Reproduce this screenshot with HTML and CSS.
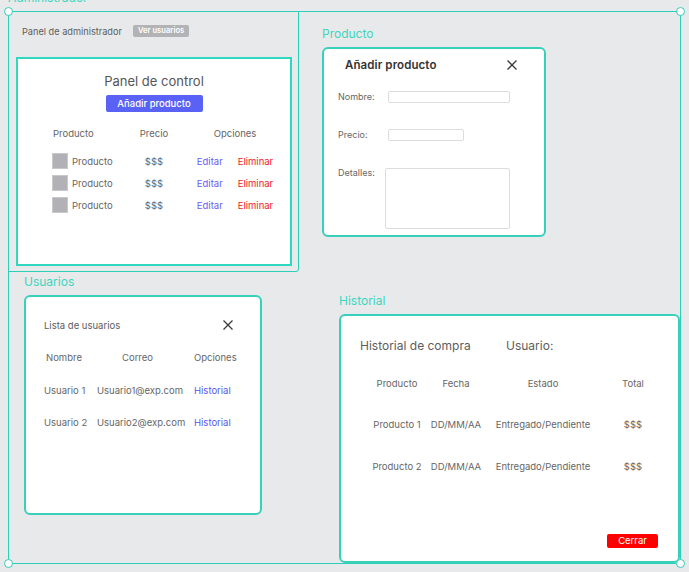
FILE: index.html
```html
<!DOCTYPE html>
<html lang="es">
<head>
<meta charset="utf-8">
<title>Administrador</title>
<link rel="stylesheet" href="styles.css">
</head>
<body>
<div class="canvas">
  <div class="selection">
    <span class="handle tl"></span><span class="handle tr"></span>
    <span class="handle bl"></span><span class="handle br"></span>
  </div>

  <section class="board board-admin">
    <div class="board-label">Administrador</div>
    <div class="admin-frame">
      <div class="admin-head">
        <span>Panel de administrador</span>
        <span class="badge">Ver usuarios</span>
      </div>
      <div class="panel">
        <div class="panel-title">Panel de control</div>
        <button class="btn-primary">Añadir producto</button>
        <div class="ptable">
          <div class="ph c1">Producto</div><div class="ph c2">Precio</div><div class="ph c3">Opciones</div>
          <div class="pr c1"><span class="thumb"></span>Producto</div><div class="pr c2">$$$</div><div class="pr c3"><span class="edit">Editar</span><span class="del">Eliminar</span></div>
          <div class="pr c1"><span class="thumb"></span>Producto</div><div class="pr c2">$$$</div><div class="pr c3"><span class="edit">Editar</span><span class="del">Eliminar</span></div>
          <div class="pr c1"><span class="thumb"></span>Producto</div><div class="pr c2">$$$</div><div class="pr c3"><span class="edit">Editar</span><span class="del">Eliminar</span></div>
        </div>
      </div>
    </div>
  </section>

  <section class="board board-producto">
    <div class="board-label">Producto</div>
    <div class="card card-producto">
      <div class="card-head">
        <span class="modal-title">Añadir producto</span>
        <svg class="close" viewBox="0 0 10 10" width="10" height="10"><path d="M0.5 0.5L9.5 9.5M9.5 0.5L0.5 9.5" stroke="#3b3b3b" stroke-width="1.3" fill="none"/></svg>
      </div>
      <div class="form">
        <label class="flabel">Nombre:</label><span class="input in-long"></span>
        <label class="flabel">Precio:</label><span class="input in-short"></span>
        <label class="flabel top">Detalles:</label><span class="input textarea"></span>
      </div>
    </div>
  </section>

  <section class="board board-usuarios">
    <div class="board-label">Usuarios</div>
    <div class="card card-usuarios">
      <div class="card-head uhead">
        <span class="small-title">Lista de usuarios</span>
        <svg class="close" viewBox="0 0 10 10" width="10" height="10"><path d="M0.5 0.5L9.5 9.5M9.5 0.5L0.5 9.5" stroke="#3b3b3b" stroke-width="1.3" fill="none"/></svg>
      </div>
      <div class="utable">
        <div class="uh u1">Nombre</div><div class="uh u2">Correo</div><div class="uh u3">Opciones</div>
        <div class="ur u1">Usuario 1</div><div class="ur u2">Usuario1@exp.com</div><div class="ur u3 link">Historial</div>
        <div class="ur u1">Usuario 2</div><div class="ur u2">Usuario2@exp.com</div><div class="ur u3 link">Historial</div>
      </div>
    </div>
  </section>

  <section class="board board-historial">
    <div class="board-label">Historial</div>
    <div class="card card-historial">
      <div class="hhead">
        <span>Historial de compra</span>
        <span>Usuario:</span>
      </div>
      <div class="htable">
        <div class="hh">Producto</div><div class="hh">Fecha</div><div class="hh">Estado</div><div class="hh">Total</div>
        <div class="hr">Producto 1</div><div class="hr">DD/MM/AA</div><div class="hr">Entregado/Pendiente</div><div class="hr">$$$</div>
        <div class="hr">Producto 2</div><div class="hr">DD/MM/AA</div><div class="hr">Entregado/Pendiente</div><div class="hr">$$$</div>
      </div>
      <div class="hfoot"><button class="btn-close">Cerrar</button></div>
    </div>
  </section>
</div>
</body>
</html>
```

FILE: styles.css
```css
* { box-sizing: border-box; }
html, body { margin: 0; padding: 0; }
body {
  background: #e8e9ea;
  font-family: Inter, "Noto Sans", sans-serif;
  color: #666;
  width: 689px;
  height: 572px;
  overflow: hidden;
}
.canvas { position: relative; width: 689px; height: 572px; }

.selection {
  position: absolute;
  left: 8px; top: 11px;
  width: 673px; height: 553px;
  border: 1px solid #2ccfb8;
}
.handle {
  position: absolute;
  width: 9px; height: 9px;
  border-radius: 50%;
  background: #fff;
  border: 1.5px solid #2ccfb8;
  z-index: 5;
}
.handle.tl { left: -5px; top: -5px; }
.handle.tr { right: -5px; top: -5px; }
.handle.bl { left: -5px; bottom: -5px; }
.handle.br { right: -5px; bottom: -5px; }

.board { position: absolute; display: flex; flex-direction: column; gap: 6px; }
.board-label {
  font-size: 12px;
  line-height: 14px;
  height: 14px;
  color: #3dd6c0;
  white-space: nowrap;
}
.board-admin { left: 8px; top: -9px; }
.board-producto { left: 322px; top: 27px; }
.board-usuarios { left: 24px; top: 275px; }
.board-historial { left: 339px; top: 294px; }

/* Admin */
.admin-frame {
  width: 291px; height: 261px;
  border: 1px solid #2ccfb8;
  border-radius: 0 0 3px 0;
  padding: 12px 7px 0 7px;
  display: flex; flex-direction: column;
  gap: 19px;
}
.admin-head {
  display: flex; align-items: center; gap: 11px;
  padding-left: 6px;
  height: 14px;
  font-size: 9.2px;
  color: #5d5d5d;
}
.badge {
  background: #b3b3b6;
  color: #fff;
  font-size: 7.6px;
  font-weight: 600;
  padding: 0 5px;
  line-height: 12px;
  border-radius: 2px;
}
.panel {
  width: 276px; height: 209px;
  background: #fff;
  border: 2px solid #2fd8c0;
  display: flex; flex-direction: column; align-items: center;
  padding-top: 14px;
}
.panel-title { font-size: 13px; line-height: 16px; color: #555; }
.btn-primary {
  margin-top: 6px;
  width: 97px; height: 17px;
  border: 0; border-radius: 2px;
  background: #5a62f6;
  color: #fff;
  font-family: inherit;
  font-size: 9.5px;
  font-weight: 500;
  padding: 0;
}
.ptable {
  align-self: flex-start;
  margin-left: 34px;
  margin-top: 15px;
  display: grid;
  grid-template-columns: 78px 48px 114px;
  grid-auto-rows: auto;
  font-size: 9.5px;
  color: #666;
}
.ph { line-height: 14px; height: 14px; margin-bottom: 9px; }
.pr { display: flex; align-items: center; height: 22px; }
.c1 { justify-content: flex-start; }
.ph.c1 { padding-left: 1px; }
.c2, .c3 { text-align: center; justify-content: center; }
.thumb {
  width: 16px; height: 16px;
  background: #b2b2b6;
  border: 1px solid #c9c9cc;
  margin-right: 4px;
}
.edit { color: #6a5af6; }
.del { color: #f2182a; margin-left: 15px; }

/* Cards */
.card {
  background: #fff;
  border: 2px solid #38d0bb;
  border-radius: 6px;
}
.card-producto { width: 224px; height: 190px; padding: 9px 27px 0 21px; }
.card-head { display: flex; justify-content: space-between; align-items: center; height: 14px; }
.modal-title { font-size: 11.5px; font-weight: 600; color: #333; letter-spacing: 0.1px; }
.close { display: block; }
.form {
  margin-top: 19px;
  margin-left: -7px;
  display: grid;
  grid-template-columns: 50px 1fr;
  align-items: center;
  font-size: 9px;
  color: #666;
}
.flabel { line-height: 12px; }
.flabel.top { align-self: start; }
.input {
  display: block;
  height: 12px;
  border: 1px solid #dcdcdc;
  border-radius: 2px;
  background: #fff;
}
.in-long { width: 122px; }
.in-short { width: 76px; margin-top: 26px; }
.form .flabel:nth-of-type(2) { margin-top: 26px; }
.textarea {
  width: 125px; height: 61px;
  margin-left: -3px;
  margin-top: 27px;
}
.form .flabel.top { margin-top: 26px; }

/* Usuarios */
.card-usuarios { width: 238px; height: 220px; padding: 21px 27px 0 18px; }
.uhead { height: 14px; }
.small-title { font-size: 9.5px; color: #5d5d5d; }
.utable {
  margin-top: 19px;
  display: grid;
  grid-template-columns: 53px 97px 1fr;
  font-size: 9.5px;
  color: #666;
}
.uh { line-height: 14px; height: 14px; margin-bottom: 19px; }
.uh.u1 { padding-left: 2px; }
.uh.u2 { padding-left: 25px; }
.ur { line-height: 14px; height: 14px; margin-bottom: 18px; }
.link { color: #5a56f4; }

/* Historial */
.card-historial {
  width: 341px; height: 249px;
  display: flex; flex-direction: column;
  padding: 22px 20px 13px 0;
}
.hhead {
  display: flex;
  padding-left: 19px;
  font-size: 12px; line-height: 16px; color: #5d5d5d;
}
.hhead span:first-child { width: 146px; }
.htable {
  margin-top: 23px;
  margin-left: 29px;
  display: grid;
  grid-template-columns: 54px 64px 110px 70px;
  font-size: 9.5px;
  color: #666;
  text-align: center;
}
.hh { line-height: 14px; height: 14px; margin-bottom: 27px; white-space: nowrap; }
.hr { line-height: 14px; height: 14px; margin-bottom: 28px; white-space: nowrap; }
.hfoot { margin-top: auto; display: flex; justify-content: flex-end; }
.btn-close {
  width: 51px; height: 14px;
  background: #ff0000;
  color: #fff;
  border: 0; border-radius: 2px;
  font-family: inherit;
  font-size: 9.5px;
  padding: 0;
  line-height: 14px;
}
```
